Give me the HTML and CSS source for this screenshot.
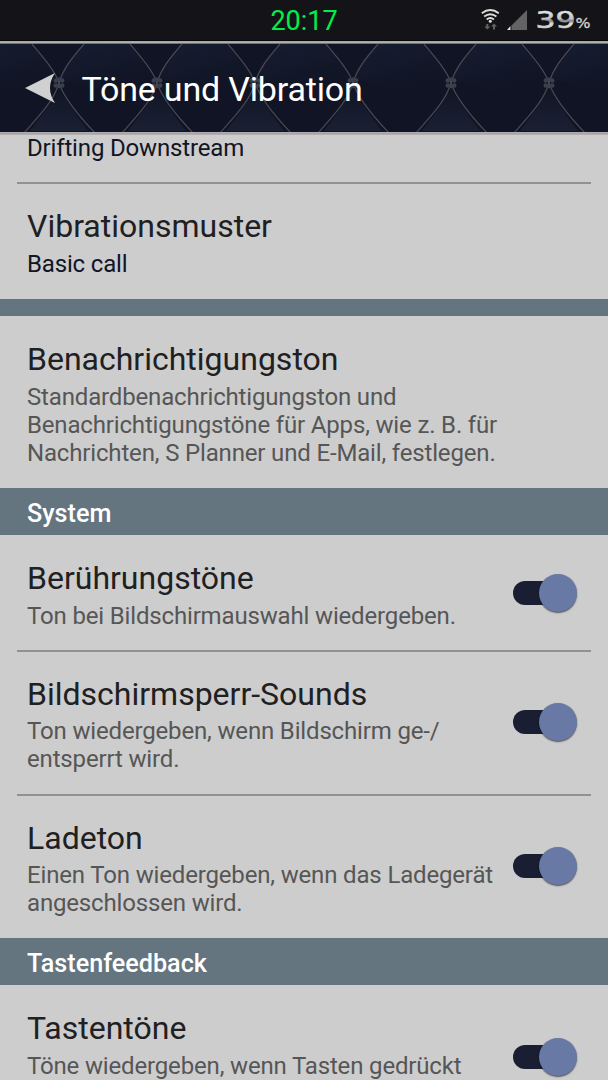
FILE: index.html
```html
<!DOCTYPE html>
<html lang="de">
<head>
<meta charset="utf-8">
<title>Töne und Vibration</title>
<link rel="stylesheet" href="styles.css">
</head>
<body>
<div class="screen">
  <div class="status">
    <span class="clock">20:17</span>
    <svg class="status-icons" width="128" height="40" viewBox="480 0 128 40">
      <defs>
        <linearGradient id="chrome" gradientUnits="userSpaceOnUse" x1="0" y1="11" x2="0" y2="29">
          <stop offset="0" stop-color="#e4e4e2"/><stop offset=".42" stop-color="#c4c4c2"/><stop offset=".55" stop-color="#858583"/><stop offset=".7" stop-color="#deded8"/><stop offset="1" stop-color="#c8c8c4"/>
        </linearGradient>
      </defs>
      <g fill="none" stroke="#deded8" stroke-width="1.9">
        <path d="M481.8 13.2Q490.3 6.8 498.8 13.2"/>
        <path d="M484.2 16.5Q490.3 11.8 496.4 16.5"/>
        <path d="M486.7 19.5Q490.3 16.7 493.9 19.5"/>
      </g>
      <circle cx="490.3" cy="21.3" r="1.5" fill="#deded8"/>
      <path d="M486.300 24v2.500h-2l3 3 3-3h-2v-2.500zM493 29.500v-3h-2l3-3 3 3h-2v3z" fill="#626262"/>
      <path d="M507 30h3.5v-4z" fill="#deded8"/>
      <path d="M511.500 30h15.500V10L511.500 25.600z" fill="#636363"/>
      <text class="battery" x="535.5" y="28.300" textLength="40" lengthAdjust="spacingAndGlyphs" fill="url(#chrome)" stroke="url(#chrome)">39</text>
      <text class="percent" x="575.5" y="28.300" textLength="15" lengthAdjust="spacingAndGlyphs">%</text>
    </svg>
  </div>
  <header class="bar">
    <svg class="quilt" width="608" height="88" viewBox="0 44 608 88">
      <defs>
        <linearGradient id="puff" x1="0" y1="0" x2="0" y2="1"><stop offset="0" stop-color="#111525"/><stop offset="1" stop-color="#1a2033"/></linearGradient>
        <linearGradient id="sheen" x1="0" y1="0" x2=".5" y2="1"><stop offset="0" stop-color="#161d30"/><stop offset="1" stop-color="#101424"/></linearGradient>
        <g id="seam">
          <path d="M25 -39C12 -24 7 -18 3 -5L50 12 94 -4C90 -18 84 -22 71 -39z" fill="url(#sheen)"/>
          <path d="M0 4Q8 21 29 48H-29Q-8 21 0 4z" fill="url(#puff)"/>
          <g fill="none" stroke="#474952" stroke-width="1.200">
            <path d="M-27 -39C-13 -22 -4 -12 0 0C5 15 18 31 36 50"/>
            <path d="M25 -39C12 -24 4 -14 0 0C-5 17 -18 31 -35 50"/>
          </g>
          <g fill="#3c3f4b"><circle cx="-3.200" cy="-2.500" r="2.300"/><circle cx="3.200" cy="-2.500" r="2.300"/><circle cx="-3.200" cy="2.500" r="2.300"/><circle cx="3.200" cy="2.500" r="2.300"/><circle cy="-4" r="1.800"/><circle cy="3.600" r="1.800"/></g>
        </g>
      </defs>
      <rect y="44" width="608" height="88" fill="#101424"/>
      <use href="#seam" x="-39" y="83"/><use href="#seam" x="59" y="83"/><use href="#seam" x="157" y="83"/><use href="#seam" x="255" y="83"/>
      <use href="#seam" x="353" y="83"/><use href="#seam" x="451" y="83"/><use href="#seam" x="549" y="83"/>
    </svg>
    <svg class="back" width="30" height="30" viewBox="0 0 30 30"><path d="M0 15L30 0Q20 15 30 30z" fill="#d0d0d0"/></svg>
    <h1 class="heading">Töne und Vibration</h1>
  </header>
  <main class="list">
    <section class="row first"><p class="value">Drifting Downstream</p></section>
    <section class="row line"><div class="text"><h2>Vibrationsmuster</h2><p class="value">Basic call</p></div></section>
    <div class="band"></div>
    <section class="row"><div class="text"><h2>Benachrichtigungston</h2><p>Standardbenachrichtigungston und<br>Benachrichtigungstöne für Apps, wie z. B. für<br>Nachrichten, S Planner und E-Mail, festlegen.</p></div></section>
    <h3 class="group">System</h3>
    <section class="row"><div class="text"><h2>Berührungstöne</h2><p>Ton bei Bildschirmauswahl wiedergeben.</p></div><span class="switch"><i class="knob"></i></span></section>
    <section class="row line tight"><div class="text"><h2>Bildschirmsperr-Sounds</h2><p>Ton wiedergeben, wenn Bildschirm ge-/<br>entsperrt wird.</p></div><span class="switch"><i class="knob"></i></span></section>
    <section class="row line tight last"><div class="text"><h2>Ladeton</h2><p>Einen Ton wiedergeben, wenn das Ladegerät<br>angeschlossen wird.</p></div><span class="switch"><i class="knob"></i></span></section>
    <h3 class="group">Tastenfeedback</h3>
    <section class="row partial"><div class="text"><h2>Tastentöne</h2><p>Töne wiedergeben, wenn Tasten gedrückt</p></div><span class="switch"><i class="knob"></i></span></section>
  </main>
</div>
</body>
</html>
```
FILE: styles.css
```css
* { box-sizing: border-box; margin: 0; padding: 0; }
html, body { overflow: hidden; }
body { width: 608px; height: 1080px; font-family: Roboto, sans-serif; background: #cdcdcd; }
.screen { display: flex; flex-direction: column; height: 1080px; overflow: hidden; }
.status { flex: none; height: 40px; background: #141418; display: grid; grid-template-columns: 128px 1fr 128px; }
.clock { grid-column: 2; text-align: center; color: #00ee4b; font-size: 27px; line-height: 43px; }
.status-icons { display: block; }
.battery { font: 23.500px "DejaVu Sans", sans-serif; stroke-width: 0.600px; }
.percent { font: 14px "DejaVu Sans", sans-serif; fill: #d5d5d1; stroke: #d5d5d1; stroke-width: 0.300px; }
.bar { flex: none; position: relative; height: 95px; display: flex; align-items: center; padding-left: 25px; gap: 27px; background: linear-gradient(#08090c 0 1px, #9b9e9d 1px, #b6b9b6 3px, #262930 4px, #111525 5px 91px, #b5b1b2 92px, #a29fa0 94px, #c0c0c0 95px); }
.quilt { position: absolute; left: 0; top: 4px; }
.back, .heading { position: relative; }
.heading { font-weight: 400; font-size: 34px; line-height: 40px; letter-spacing: -0.180px; color: #fff; padding-top: 2px; margin-left: -0.500px; }
.list { flex: none; margin-top: -1px; }
.row { display: flex; align-items: center; justify-content: space-between; position: relative; padding: 24px 31px 21px 27px; }
.row.first { padding: 0 27px; height: 49px; align-items: flex-start; }
.row.tight { padding-bottom: 22px; }
.row.last { padding-bottom: 21px; }
.row.partial { height: 96px; padding-bottom: 0; align-items: flex-start; }
.partial .switch { margin-top: 28px; }
.line::before { content: ""; position: absolute; left: 17px; right: 17px; top: -1px; height: 1.500px; background: #8f9290; }
.text { flex: none; }
h2 { font-weight: 400; font-size: 32px; line-height: 38px; color: #202022; margin-bottom: 5px; }
.tight h2 { margin-bottom: 4px; }
p { font-size: 24px; line-height: 28px; letter-spacing: -0.160px; color: #565656; white-space: nowrap; }
.value { color: #111525; }
.band { height: 17px; background: #65757f; }
.group { height: 47px; padding-left: 27px; background: #65757f; color: #fff; font-size: 25.200px; line-height: 51px; font-weight: 500; }
.switch { flex: none; width: 64px; height: 40px; margin-top: -4px; display: flex; align-items: center; justify-content: flex-end; position: relative; }
.switch::before { content: ""; position: absolute; left: 0; top: 8px; width: 50px; height: 24px; border-radius: 12px; background: #191e32; }
.knob { position: relative; width: 38px; height: 38px; border-radius: 50%; background: #6979a6; box-shadow: 0 1px 1.500px rgba(0, 0, 0, .6); }
```
